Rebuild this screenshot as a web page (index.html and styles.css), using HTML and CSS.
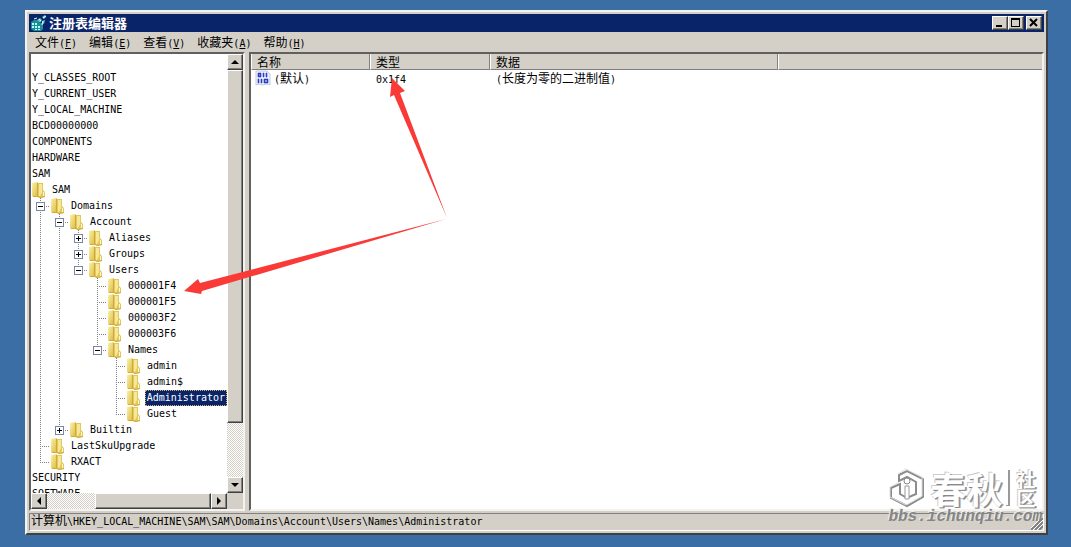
FILE: index.html
```
<!DOCTYPE html>
<html lang="zh-CN">
<head>
  <meta charset="utf-8">
  <title>注册表编辑器</title>
  <meta name="viewport" content="width=device-width, initial-scale=1.0">
  <link rel="stylesheet" href="styles.css">
</head>
<body>

<svg class="defs" width="0" height="0">
  <defs>
    <linearGradient id="gold" x1="0" x2="1" y1="0" y2="1">
      <stop offset="0" stop-color="#fbf2a8"/>
      <stop offset="1" stop-color="#dcb840"/>
    </linearGradient>
    <symbol id="folder" viewBox="0 0 16 16">
      <path d="M1 1L7 0V15L2 15L1 14Z" fill="url(#gold)"/>
      <path d="M7 1L12 1V8L14 10V15L9 16L7 15Z" fill="#e3c85c"/>
      <path d="M8 2L11 2V10L9 14L8 14Z" fill="#f6e896"/>
      <path d="M6.5 1V14" stroke="#cda93a" fill="none"/>
      <path d="M12.5 10V14" stroke="#fff8cf" fill="none"/>
      <path d="M2 14.5H7L9 15.5L14 14.5" stroke="#cfaa3c" fill="none"/>
    </symbol>
  </defs>
</svg>

<div class="window">
  <div class="titlebar">
    <svg class="app-icon" width="16" height="16" viewBox="0 0 16 16">
      <path d="M0 7L3 5H7L8 8H12V14L10 16H3L0 14Z" fill="#1c8f94"/>
      <path d="M1 8H3V10H1ZM4 8H6V10H4ZM1 11H3V13H1ZM4 11H6V13H4ZM7 11H9V13H7ZM4 14H6V15H4ZM7 14H9V15H7Z" fill="#b4ffff"/>
      <path d="M6 5L9 3L11 5L9 8ZM11 2L14 0L15 2L13 4ZM11 6L14 5L13 9L11 8Z" fill="#5fc6c8"/>
      <path d="M8 4L10 6M12 3L15 1M12 6L11 10M3 4L6 3" stroke="#e8ffff" fill="none"/>
    </svg>
    <h1>注册表编辑器</h1>
    <button class="cap" aria-label="最小化"><svg width="12" height="10" viewBox="0 0 12 10"><path d="M2 7H8V9H2Z"/></svg></button>
    <button class="cap" aria-label="最大化"><svg width="12" height="10" viewBox="0 0 12 10"><path d="M1 0H10V9H1ZM2 2V8H9V2Z" fill-rule="evenodd"/></svg></button>
    <button class="cap close" aria-label="关闭"><svg width="12" height="10" viewBox="0 0 12 10"><path d="M2 1L9 8M9 1L2 8" stroke="#000" stroke-width="2"/></svg></button>
  </div>

  <div class="menubar">
    <button>文件<span class="lat">(<u>F</u>)</span></button>
    <button>编辑<span class="lat">(<u>E</u>)</span></button>
    <button>查看<span class="lat">(<u>V</u>)</span></button>
    <button>收藏夹<span class="lat">(<u>A</u>)</span></button>
    <button>帮助<span class="lat">(<u>H</u>)</span></button>
  </div>

  <div class="panes">
    <div class="pane left">
      <div class="tree lat">
        <ul class="root">
          <li><div class="row"></div></li>
          <li><div class="row cut">Y_CLASSES_ROOT</div></li>
          <li><div class="row cut">Y_CURRENT_USER</div></li>
          <li><div class="row cut">Y_LOCAL_MACHINE</div></li>
          <li><div class="row cut">BCD00000000</div></li>
          <li><div class="row cut">COMPONENTS</div></li>
          <li><div class="row cut">HARDWARE</div></li>
          <li><div class="row cut">SAM</div></li>
          <li>
            <div class="row"><svg class="folder"><use href="#folder"/></svg><span class="label">SAM</span></div>
            <ul>
              <li>
                <div class="row"><span class="branch"><button class="box" aria-label="折叠"></button></span><svg class="folder"><use href="#folder"/></svg><span class="label">Domains</span></div>
                <ul>
                  <li>
                    <div class="row"><span class="branch"><button class="box" aria-label="折叠"></button></span><svg class="folder"><use href="#folder"/></svg><span class="label">Account</span></div>
                    <ul>
                      <li><div class="row"><span class="branch"><button class="box plus" aria-label="展开"></button></span><svg class="folder"><use href="#folder"/></svg><span class="label">Aliases</span></div></li>
                      <li><div class="row"><span class="branch"><button class="box plus" aria-label="展开"></button></span><svg class="folder"><use href="#folder"/></svg><span class="label">Groups</span></div></li>
                      <li>
                        <div class="row"><span class="branch"><button class="box" aria-label="折叠"></button></span><svg class="folder"><use href="#folder"/></svg><span class="label">Users</span></div>
                        <ul>
                          <li><div class="row"><span class="branch"></span><svg class="folder"><use href="#folder"/></svg><span class="label">000001F4</span></div></li>
                          <li><div class="row"><span class="branch"></span><svg class="folder"><use href="#folder"/></svg><span class="label">000001F5</span></div></li>
                          <li><div class="row"><span class="branch"></span><svg class="folder"><use href="#folder"/></svg><span class="label">000003F2</span></div></li>
                          <li><div class="row"><span class="branch"></span><svg class="folder"><use href="#folder"/></svg><span class="label">000003F6</span></div></li>
                          <li>
                            <div class="row"><span class="branch"><button class="box" aria-label="折叠"></button></span><svg class="folder"><use href="#folder"/></svg><span class="label">Names</span></div>
                            <ul>
                              <li><div class="row"><span class="branch"></span><svg class="folder"><use href="#folder"/></svg><span class="label">admin</span></div></li>
                              <li><div class="row"><span class="branch"></span><svg class="folder"><use href="#folder"/></svg><span class="label">admin$</span></div></li>
                              <li><div class="row"><span class="branch"></span><svg class="folder"><use href="#folder"/></svg><span class="label selected">Administrator</span></div></li>
                              <li><div class="row"><span class="branch"></span><svg class="folder"><use href="#folder"/></svg><span class="label">Guest</span></div></li>
                            </ul>
                          </li>
                        </ul>
                      </li>
                    </ul>
                  </li>
                  <li><div class="row"><span class="branch"><button class="box plus" aria-label="展开"></button></span><svg class="folder"><use href="#folder"/></svg><span class="label">Builtin</span></div></li>
                </ul>
              </li>
              <li><div class="row"><span class="branch"></span><svg class="folder"><use href="#folder"/></svg><span class="label">LastSkuUpgrade</span></div></li>
              <li><div class="row"><span class="branch"></span><svg class="folder"><use href="#folder"/></svg><span class="label">RXACT</span></div></li>
            </ul>
          </li>
          <li><div class="row cut">SECURITY</div></li>
          <li><div class="row cut">SOFTWARE</div></li>
        </ul>
      </div>
      <div class="scroll vert">
        <button aria-label="向上"><svg width="8" height="4" viewBox="0 0 8 4"><path d="M0 4L4 0L8 4Z"/></svg></button>
        <div class="thumb"></div>
        <div class="track"></div>
        <button aria-label="向下"><svg width="8" height="4" viewBox="0 0 8 4"><path d="M0 0H8L4 4Z"/></svg></button>
      </div>
      <div class="scroll horiz">
        <button aria-label="向左"><svg width="4" height="8" viewBox="0 0 4 8"><path d="M4 0V8L0 4Z"/></svg></button>
        <div class="track"></div>
        <div class="thumb"></div>
        <button aria-label="向右"><svg width="4" height="8" viewBox="0 0 4 8"><path d="M0 0L4 4L0 8Z"/></svg></button>
      </div>
    </div>

    <div class="pane right">
      <table>
        <thead>
          <tr><th class="name">名称</th><th class="type">类型</th><th class="data">数据</th><th></th></tr>
        </thead>
        <tbody>
          <tr>
            <td class="value">
              <div class="entry">
                <svg width="16" height="16" viewBox="0 0 16 16">
                  <path d="M1 1H12L15 4V15L12 14L8 15L4 14L1 15Z" fill="#eef1fb" stroke="#c3cade"/>
                  <path d="M3 3H6V7H3ZM4 4V6H5V4ZM8 3H9V7H8ZM11 3H12V7H11ZM3 9H4V13H3ZM6 9H7V13H6ZM9 9H13V13H9ZM10 10V12H12V10Z" fill="#2a3fc0" stroke="#2a3fc0" stroke-width=".6" fill-rule="evenodd"/>
                </svg>
                <span><span class="lat">(</span>默认<span class="lat">)</span></span>
              </div>
            </td>
            <td><span class="lat">0x1f4</span></td>
            <td><span class="lat">(</span>长度为零的二进制值<span class="lat">)</span></td>
            <td></td>
          </tr>
        </tbody>
      </table>
    </div>
  </div>

  <div class="status">
    <span>计算机<span class="lat">\HKEY_LOCAL_MACHINE\SAM\SAM\Domains\Account\Users\Names\Administrator</span></span>
    <svg width="12" height="12" viewBox="0 0 12 12">
      <path d="M0 12L12 0M4 12L12 4M8 12L12 8" stroke="#808080" stroke-width="2"/>
      <path d="M-2 12L12 -2M2 12L12 2M6 12L12 6" stroke="#fff"/>
    </svg>
  </div>

  <div class="watermark">
    <div class="brand">
      <svg width="38" height="42" viewBox="0 0 38 42">
        <g fill="none">
          <path d="M11 8L19 4L35 12V30L19 39L3 31V21L12 17V27L19 31L28 27V15L19 10L11 14Z" fill="#fff" stroke="#8c8c8c" stroke-width="2"/>
          <path d="M10 7L18 2L34 10V29L18 38L2 30V20L10 16" stroke="#ddd"/>
          <path d="M17 19H21V32H17Z" fill="#fff" stroke="#999"/>
        </g>
        <circle cx="19" cy="14" r="3" fill="#fff" stroke="#888"/>
      </svg>
      <span class="big">春秋</span>
      <span class="bar"></span>
      <span class="small"><span>社</span><span>区</span></span>
    </div>
    <div class="url">bbs.ichunqiu.com</div>
  </div>
</div>

<svg class="arrows" width="460" height="300" viewBox="0 0 460 300">
  <path d="M184 291L198 279L200 283L446 219L202 291L201 294Z"/>
  <path d="M392 78L405 91L400 93L447 218L394 95L390 97Z"/>
</svg>

</body>
</html>
```
FILE: styles.css
```
* { box-sizing: border-box; }

body {
  margin: 0;
  height: 100vh;
  padding: 10px 23px 12px 25px;
  background: #3a6ea5;
  color: #000;
  font: 12px/16px "Noto Sans CJK SC", sans-serif;
  overflow: hidden;
}

button {
  font: inherit;
  color: inherit;
  padding: 0;
  margin: 0;
  border: 0;
  background: none;
}

ul { list-style: none; margin: 0; padding: 0; }

svg { display: block; flex: none; }

.defs { position: absolute; }

.lat {
  font-family: "DejaVu Sans Mono", monospace;
  font-size: 10px;
}

/* window frame */
.window {
  position: relative;
  height: 100%;
  display: flex;
  flex-direction: column;
  padding: 2px;
  background: #d4d0c8;
  border: 2px solid;
  border-color: #f4f2ee #404040 #404040 #f4f2ee;
}

.titlebar {
  display: flex;
  align-items: center;
  height: 18px;
  padding: 0 2px;
  background: #0a246a;
  color: #fff;
}

.titlebar h1 {
  flex: 1;
  margin: 0 0 0 2px;
  font-size: 13px;
  line-height: 18px;
  font-weight: bold;
}

.cap, .scroll button, .thumb {
  background: #d4d0c8;
  border: 1px solid;
  border-color: #fff #404040 #404040 #fff;
  box-shadow: inset -1px -1px 0 #808080;
}

.cap {
  width: 16px;
  height: 14px;
  padding: 1px;
}

.close { margin-left: 2px; }

.menubar {
  display: flex;
  height: 20px;
}

.menubar button {
  padding: 0 6px;
  line-height: 20px;
}

/* panes */
.panes {
  flex: 1;
  min-height: 0;
  display: flex;
  gap: 4px;
}

.pane {
  background: #fff;
  border: 2px solid;
  border-color: #606060 #f4f2ee #f4f2ee #606060;
  overflow: hidden;
}

.left {
  flex: none;
  width: 216px;
  display: grid;
  grid-template-columns: 1fr 16px;
  grid-template-rows: 1fr 16px;
  background: #d4d0c8;
}

.right { flex: 1; }

/* tree */
.tree {
  min-height: 0;
  overflow: hidden;
  background: #fff;
}

.row {
  display: flex;
  height: 16px;
  line-height: 16px;
  white-space: nowrap;
}

.cut { padding-left: 1px; }

.tree ul ul li {
  background: repeating-linear-gradient(#808080 0 1px, transparent 1px 2px) 9px 0 / 1px 100% no-repeat;
}

.tree ul ul li:last-child { background-size: 1px 9px; }

.tree ul ul ul { padding-left: 19px; }

.branch {
  width: 19px;
  padding: 4px 5px;
  background: repeating-linear-gradient(90deg, #808080 0 1px, transparent 1px 2px) 9px 8px / 10px 1px no-repeat;
}

.box {
  display: block;
  width: 9px;
  height: 9px;
  border: 1px solid #7b87a0;
  background: linear-gradient(#000, #000) center / 5px 1px no-repeat #fff;
}

.plus {
  background: linear-gradient(#000, #000) center / 5px 1px no-repeat,
              linear-gradient(#000, #000) center / 1px 5px no-repeat #fff;
}

.folder { width: 16px; height: 16px; }

.label { margin-left: 3px; padding: 0 2px; }

.selected {
  background: #0a246a;
  color: #fff;
  outline: 1px dotted #d8b060;
  outline-offset: -1px;
}

/* scroll bars */
.scroll { display: flex; min-height: 0; }
.vert { flex-direction: column; }

.scroll button {
  flex: none;
  display: flex;
  align-items: center;
  justify-content: center;
  width: 16px;
  height: 16px;
}

.track {
  flex: 1;
  background: repeating-conic-gradient(#fff 0 25%, #d4d0c8 0 50%) 0 0 / 2px 2px;
}

.vert .thumb { flex: 13; }
.vert .track { flex: 2; }
.horiz .thumb { flex: 12; }
.horiz .track { flex: 5; }

/* value list */
table {
  width: 100%;
  table-layout: fixed;
  border-collapse: separate;
  border-spacing: 0;
}

th {
  height: 16px;
  padding: 0 5px;
  text-align: left;
  font-weight: normal;
  line-height: 15px;
  background: #d4d0c8;
  border: solid;
  border-width: 0 1px 1px 1px;
  border-color: #fff #808080 #808080 #fff;
}

th:last-child { border-right: 0; }

.name { width: 119px; }
.type { width: 120px; }
.data { width: 288px; }

td { padding: 0 6px; height: 16px; white-space: nowrap; }
.value { padding: 0 4px; }
.entry { display: flex; gap: 3px; }

/* status bar */
.status {
  display: flex;
  justify-content: space-between;
  align-items: flex-end;
  height: 18px;
  margin-top: 2px;
  padding-left: 1px;
  line-height: 16px;
  border: 1px solid;
  border-color: #808080 #fff #fff #808080;
}

/* overlays */
.arrows {
  position: absolute;
  left: 0;
  top: 0;
  fill: #f93a37;
  pointer-events: none;
}

.watermark {
  position: absolute;
  right: 4px;
  bottom: 10px;
  color: #fff;
  text-shadow: 1px 1px 0 #888, 2px 1px 0 #aaa, -1px -1px 0 #ccc;
  pointer-events: none;
}

.brand {
  display: flex;
  align-items: center;
  height: 42px;
  margin-bottom: 2px;
}

.big {
  margin-left: 4px;
  font-size: 36px;
  line-height: 36px;
  font-weight: bold;
}

.bar {
  width: 4px;
  height: 36px;
  margin: 0 6px 0 4px;
  background: #fff;
  border: solid #999;
  border-width: 0 2px 1px 0;
}

.small {
  display: flex;
  flex-direction: column;
  font-size: 19px;
  line-height: 19px;
  font-weight: bold;
}

.url {
  font: italic bold 16px/12px "Liberation Mono", monospace;
  text-shadow: -1px -1px 0 #eee;
  color: #858585;
}
```
